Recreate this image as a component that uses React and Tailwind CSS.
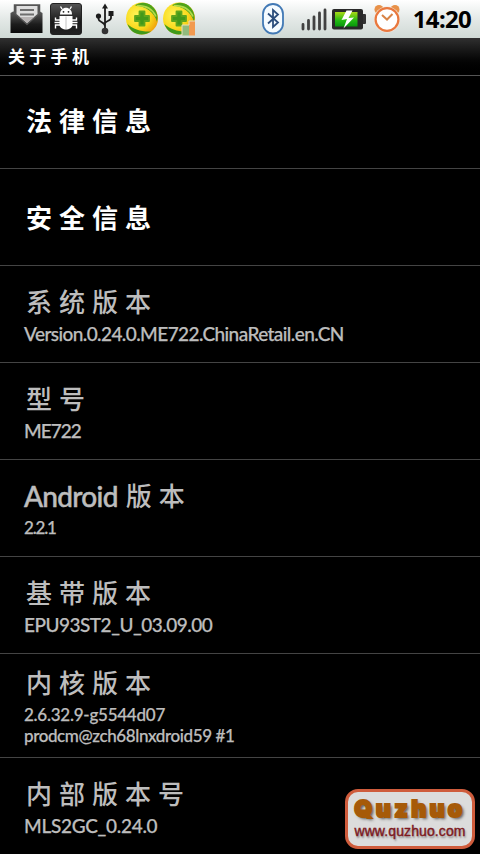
const rows = [
  { title: "法律信息", active: true, height: "h-[93px]", pad: "pt-[24px]" },
  { title: "安全信息", active: true, height: "h-[97px]", pad: "pt-[28px]" },
  {
    title: "系统版本",
    lines: [{ text: "Version.0.24.0.ME722.ChinaRetail.en.CN", style: "text-[19px] tracking-[-0.58px]" }],
  },
  { title: "型号", lines: [{ text: "ME722", style: "text-[19px] tracking-[-1px]" }] },
  { latin: "Android", title: "版本", lines: [{ text: "2.2.1", style: "text-[17px] tracking-[-1.2px]" }] },
  { title: "基带版本", lines: [{ text: "EPU93ST2_U_03.09.00", style: "text-[19px] tracking-[-0.5px]" }] },
  {
    title: "内核版本",
    height: "h-[104px]",
    pad: "pt-[8px]",
    lines: [
      { text: "2.6.32.9-g5544d07", style: "text-[17px] tracking-[-0.25px]" },
      { text: "prodcm@zch68lnxdroid59 #1", style: "text-[17px] tracking-[-0.4px]" },
    ],
  },
  { title: "内部版本号", lines: [{ text: "MLS2GC_0.24.0", style: "text-[19px] tracking-[-0.3px]" }] },
];

function MailIcon() {
  return (
    <svg width="34" height="32" viewBox="0 0 34 32">
      <defs>
        <linearGradient id="mail" x1="0" y1="0" x2="0" y2="1">
          <stop offset="0" stopColor="#5a5a5a" />
          <stop offset=".6" stopColor="#1c1c1c" />
          <stop offset="1" stopColor="#0a0a0a" />
        </linearGradient>
      </defs>
      <path d="M.500 10 3 8.500h27l2.500 1.500v20H.500Z" fill="url(#mail)" />
      <path d="M5 2.500h24V10L17 20.500 5 10Z" fill="#555" stroke="#555" strokeWidth="2.500" />
      <path d="M6.500 3h21v8L17 20 6.500 11Z" fill="#dedede" />
      <path d="M10 7h14M10 11.500h14" stroke="#6e6e6e" strokeWidth="2" />
      <path d="M10 14h14l-7 6Z" fill="#b8b4b4" />
    </svg>
  );
}

function BugIcon() {
  return (
    <svg width="32" height="32" viewBox="0 0 32 32">
      <defs>
        <linearGradient id="bug" x1="0" y1="0" x2="0" y2="1">
          <stop offset="0" stopColor="#555" />
          <stop offset=".6" stopColor="#181818" />
          <stop offset="1" stopColor="#222" />
        </linearGradient>
      </defs>
      <rect x=".5" y=".5" width="31" height="31" rx="2.500" fill="url(#bug)" stroke="#222" />
      <g fill="none" stroke="#fff" strokeWidth="1.400">
        <path d="m12 6-1.500-2.500M20 6l1.500-2.500M10 17H5.500V14.500M10 19.500H4.500M10 22H5.500v3.500M22 17h4.500V14.500M22 19.500h5.500M22 22h4.500v3.500" />
      </g>
      <path d="M10 11.500c0-9 12-9 12 0Z" fill="#fff" />
      <path d="M9.500 13h13v8.500c0 3.500-3.500 5-6.500 5s-6.500-1.500-6.500-5Z" fill="#fff" />
      <path d="M16 13.500v12.500" stroke="#bbb" strokeWidth=".9" />
      <circle cx="13.500" cy="8.800" r=".9" fill="#222" />
      <circle cx="18.500" cy="8.800" r=".9" fill="#222" />
    </svg>
  );
}

function UsbIcon() {
  return (
    <svg width="20" height="32" viewBox="0 0 20 32">
      <g fill="none" stroke="#1c1c1c" strokeWidth="1.800">
        <path d="M10 4v24M3.500 14v2c0 3 6.500 3 6.500 7M16 11v4c0 3-6 3-6 5.500" />
      </g>
      <path d="m10 .5 3 5H7Z" fill="#1c1c1c" />
      <circle cx="3.500" cy="13" r="2.600" fill="#1c1c1c" />
      <rect x="13.500" y="8" width="5" height="5" fill="#1c1c1c" />
      <circle cx="10" cy="28" r="3.300" fill="#333" />
    </svg>
  );
}

function ShieldIcon({ chart }) {
  return (
    <svg width="33" height="34" viewBox="0 0 33 34">
      <defs>
        <radialGradient id="ball" cx=".35" cy=".4" r=".7">
          <stop offset="0" stopColor="#fff45a" />
          <stop offset=".6" stopColor="#f9d91c" />
          <stop offset="1" stopColor="#ef9e0a" />
        </radialGradient>
      </defs>
      <circle cx="16" cy="16.500" r="16" fill="url(#ball)" />
      <path d="M9 3.500C16-2 28 1 31 12c.8 3 .5 5 0 8C29 11 20 4 9 3.500Z" fill="#4fa31a" />
      <path d="M11 3.500c9 0 16 4 19 11" fill="none" stroke="#b3da4a" strokeWidth="1.500" />
      <path d="M1.500 22C7 27 15 30 25 29.500 17 35 5 33 1.500 22Z" fill="#3f991b" />
      <path d="M13.500 9.500h5v4.500h4.500v5h-4.500v4.500h-5V19H9v-5h4.500Z" fill="#43991a" stroke="#5fa51c" strokeWidth="1.800" strokeLinejoin="round" />
      {chart && (
        <g>
          <path d="M19 23h7v10.500h-7Z" fill="#91ba7c" />
          <path d="M26 19h6v14.500h-6Z" fill="#f29a50" />
          <path d="M19 33.500V23h7v-4h6" fill="none" stroke="#e7dfba" />
        </g>
      )}
    </svg>
  );
}

function BluetoothIcon() {
  return (
    <svg width="22" height="32" viewBox="0 0 22 32">
      <rect x="1" y="1" width="20" height="29.500" rx="10" fill="#f5fbff" stroke="#4279b5" strokeWidth="1.800" />
      <path d="m6 10.500 10 9-5 4.500V7l5 4.500-10 9" fill="none" stroke="#2b4d7c" strokeWidth="1.800" />
    </svg>
  );
}

function SignalIcon() {
  return (
    <svg width="27" height="24" viewBox="0 0 27 24">
      <path d="M2 16.500v4.500M7.500 12.500v8.500M13 9v12M18.500 5v16M24 2v19" stroke="#414141" strokeWidth="2.800" strokeLinecap="round" />
    </svg>
  );
}

function BatteryIcon() {
  return (
    <svg width="34" height="21" viewBox="0 0 34 21">
      <defs>
        <linearGradient id="charge" x1="0" y1="0" x2="0" y2="1">
          <stop offset="0" stopColor="#a9d817" />
          <stop offset=".6" stopColor="#20b812" />
          <stop offset="1" stopColor="#08970c" />
        </linearGradient>
      </defs>
      <rect x="29" y="5" width="5" height="10" rx="1" fill="#333" />
      <rect x="0" y="0" width="31" height="20.500" rx="2" fill="#292929" />
      <path d="M3 3h22.500v14.500H3Z" fill="url(#charge)" />
      <path d="m14.500 1.500-5 9.500 5.500-1-3.500 9.500 10.500-11-5.500.500 4-7.500Z" fill="#fff" />
    </svg>
  );
}

function AlarmIcon() {
  return (
    <svg width="26" height="28" viewBox="0 0 26 28">
      <circle cx="5" cy="4.500" r="4.500" fill="#e89148" />
      <circle cx="21" cy="4.500" r="4.500" fill="#e89148" />
      <circle cx="13" cy="14.500" r="13" fill="#f2e7dc" />
      <circle cx="13" cy="14.500" r="11.400" fill="#fff" stroke="#e9783e" strokeWidth="2.200" />
      <path d="m8 10 5 4.500L18.500 9" fill="none" stroke="#d88447" strokeWidth="2" />
    </svg>
  );
}

function StatusBar() {
  return (
    <header className="flex h-[38px] items-start bg-linear-to-b from-white via-[#e4e9e7] to-[#cfd9d5] pr-[9px] pl-[10px]">
      <div className="flex pt-[3px]">
        <MailIcon />
        <div className="ml-[6px]"><BugIcon /></div>
        <div className="ml-[13px]"><UsbIcon /></div>
        <div className="-mt-px ml-[11px]"><ShieldIcon /></div>
        <div className="-mt-px ml-[4px]"><ShieldIcon chart /></div>
      </div>
      <div className="ml-auto flex">
        <div className="pt-[3px]"><BluetoothIcon /></div>
        <div className="ml-[17px] pt-[8px]"><SignalIcon /></div>
        <div className="ml-[4px] pt-[9px]"><BatteryIcon /></div>
        <div className="ml-[8px] pt-[5px]"><AlarmIcon /></div>
        <time className="ml-[13px] pt-[4px] font-['Noto_Sans',sans-serif] text-[24px] leading-[30px] font-bold tracking-[-0.7px] text-black">14:20</time>
      </div>
    </header>
  );
}

function InfoRow({ row }) {
  return (
    <li className={`shrink-0 border-b border-[#444] pl-[24px] ${row.height || "h-[97px]"} ${row.pad || "pt-[15px]"} ${row.active ? "text-white" : "text-[#bdbdbd]"}`}>
      <h2 className={`flex h-[42px] items-center leading-[42px] whitespace-nowrap ${row.active ? "font-bold" : "font-medium"}`}>
        {row.latin && (
          <span className="mr-[6px] text-[28px] tracking-[-0.7px] [-webkit-text-stroke:0.5px_#bdbdbd]">{row.latin}</span>
        )}
        <span className="ml-[2px] text-[26px] tracking-[7px]">{row.title}</span>
      </h2>
      {row.lines?.map((line) => (
        <p key={line.text} className={`leading-[21px] font-medium whitespace-nowrap [-webkit-text-stroke:0.25px_#bdbdbd] ${line.style}`}>
          {line.text}
        </p>
      ))}
    </li>
  );
}

function Watermark() {
  return (
    <div className="absolute top-[789px] left-[345px] flex h-[60px] w-[130px] flex-col items-center rounded-[13px] border-[3px] border-[#cf5c3c] bg-[#dcdcdc] pt-[4px]">
      <span className="font-['Inter',sans-serif] text-[23px] leading-[27px] font-black tracking-[3.4px] text-[#a65a08] [-webkit-text-stroke:2px_#a65a08] [text-shadow:2px_2px_3px_#555]">Quzhuo</span>
      <span className="font-['Liberation_Sans',sans-serif] text-[14px] leading-[16px] tracking-[0.1px] text-[#7d1820] [-webkit-text-stroke:0.4px_#7d1820] [text-shadow:1px_2px_2px_#888]">www.quzhuo.com</span>
    </div>
  );
}

export default function App() {
  return (
    <main className="relative h-[854px] w-[480px] overflow-hidden bg-black font-['Lato','Noto_Sans_CJK_SC',sans-serif]">
      <StatusBar />
      <h1 className="h-[38px] border-b border-[#555] bg-linear-to-b from-[#303030] to-black pl-[8px] text-[17px] leading-[38px] font-bold tracking-[4.3px] text-white">
        关于手机
      </h1>
      <ul className="flex flex-col">
        {rows.map((row) => (
          <InfoRow key={row.title} row={row} />
        ))}
      </ul>
      <Watermark />
    </main>
  );
}
